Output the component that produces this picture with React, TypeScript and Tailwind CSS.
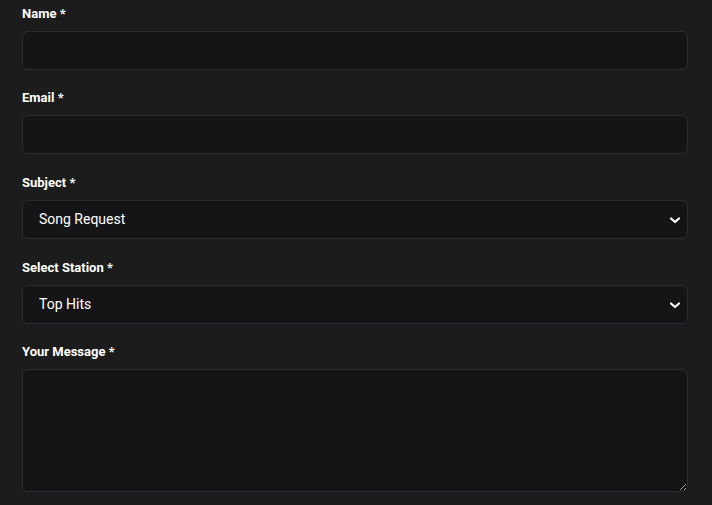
import React from "react";

const Chevron = () => (
  <svg
    className="pointer-events-none absolute right-[5px] top-1/2 -translate-y-1/2"
    width="16"
    height="16"
    viewBox="0 0 16 16"
    fill="none"
  >
    <path d="M4 6.5 L8 10 L12 6.5" stroke="#ffffff" strokeWidth="2.2" strokeLinecap="round" strokeLinejoin="round" />
  </svg>
);

const Label = ({ children }: { children: React.ReactNode }) => (
  <label className="block text-[13px] font-bold leading-[20px] text-white mb-[7px]">{children}</label>
);

const boxCls =
  "w-full rounded-[6px] border border-[#2c2c2e] bg-[#151517] text-white text-[14px] outline-none";

export default function App() {
  return (
    <div
      className="w-[712px] h-[505px] overflow-hidden bg-[#1c1c1c] px-[22px] pt-[4px] [color-scheme:dark]"
      style={{ fontFamily: "Roboto, 'Noto Sans', sans-serif" }}
    >
      <div className="w-[666px] flex flex-col">
        <div className="mb-[18px]">
          <Label>Name *</Label>
          <input className={boxCls + " h-[39px] px-4"} />
        </div>
        <div className="mb-[19px]">
          <Label>Email *</Label>
          <input className={boxCls + " h-[39px] px-4"} />
        </div>
        <div className="mb-[19px]">
          <Label>Subject *</Label>
          <div className="relative">
            <select className={boxCls + " h-[39px] pl-4 appearance-none"} defaultValue="Song Request">
              <option>Song Request</option>
            </select>
            <Chevron />
          </div>
        </div>
        <div className="mb-[18px]">
          <Label>Select Station *</Label>
          <div className="relative">
            <select className={boxCls + " h-[39px] pl-4 appearance-none"} defaultValue="Top Hits">
              <option>Top Hits</option>
            </select>
            <Chevron />
          </div>
        </div>
        <div>
          <Label>Your Message *</Label>
          <textarea className={boxCls + " h-[123px] px-4 py-2 block"} />
        </div>
      </div>
    </div>
  );
}
